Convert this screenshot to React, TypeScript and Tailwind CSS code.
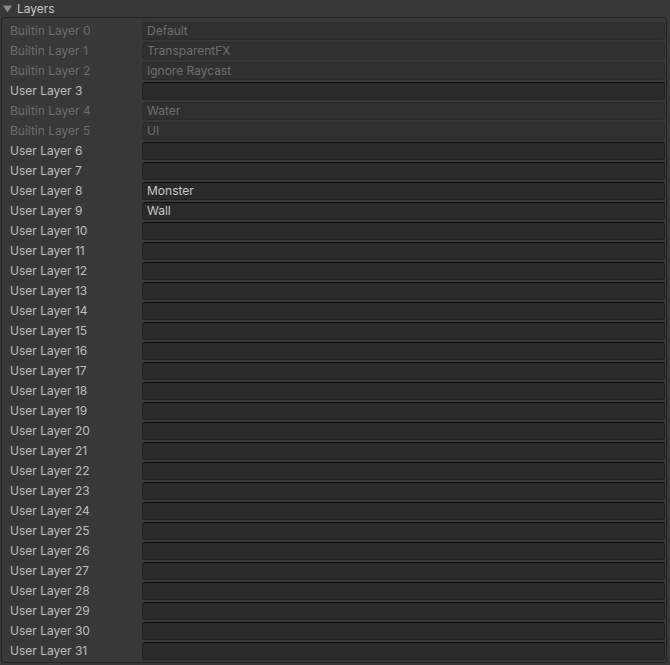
import React from 'react';

const builtin: Record<number, string> = {
  0: 'Default',
  1: 'TransparentFX',
  2: 'Ignore Raycast',
  4: 'Water',
  5: 'UI',
};

const userNames: Record<number, string> = {
  8: 'Monster',
  9: 'Wall',
};

export default function App() {
  const rows = Array.from({ length: 32 }, (_, i) => i);

  return (
    <div
      className="w-[670px] h-[665px] bg-[#383838] text-[12px] overflow-hidden"
      style={{ fontFamily: 'Inter, "Noto Sans", sans-serif' }}
    >
      {/* Foldout header */}
      <div className="h-[17px] flex items-center pl-[3px]">
        <svg width="9" height="8" viewBox="0 0 9 8" className="mr-[5px]">
          <path d="M0 0.5 L9 0.5 L4.5 7.5 Z" fill="#8a8a8a" />
        </svg>
        <span className="text-[#c4c4c4] leading-none">Layers</span>
      </div>

      {/* Layer list */}
      <div className="ml-px w-[666px] border border-[#232323] rounded-[3px] bg-[#383838] pt-[3px] pb-px">
        {rows.map((i) => {
          const isBuiltin = i in builtin;
          const label = isBuiltin ? `Builtin Layer ${i}` : `User Layer ${i}`;
          const value = isBuiltin ? builtin[i] : userNames[i] ?? '';
          return (
            <div key={i} className="h-[20px] flex items-center">
              <div
                className={`w-[140px] pl-[8px] leading-none ${
                  isBuiltin ? 'text-[#6d6d6d]' : 'text-[#bdbdbd]'
                }`}
              >
                {label}
              </div>
              {isBuiltin ? (
                <div className="flex-1 mr-px h-[18px] rounded-[3px] border border-[#2b2b2b] bg-[#303030] flex items-center pl-[4px] text-[#6f6f6f] leading-none">
                  {value}
                </div>
              ) : (
                <div className="flex-1 mr-px h-[18px] rounded-[3px] border border-[#212121] border-t-[#0d0d0d] bg-[#2a2a2a] flex items-center pl-[4px] text-[#c8c8c8] leading-none">
                  {value}
                </div>
              )}
            </div>
          );
        })}
      </div>
    </div>
  );
}
